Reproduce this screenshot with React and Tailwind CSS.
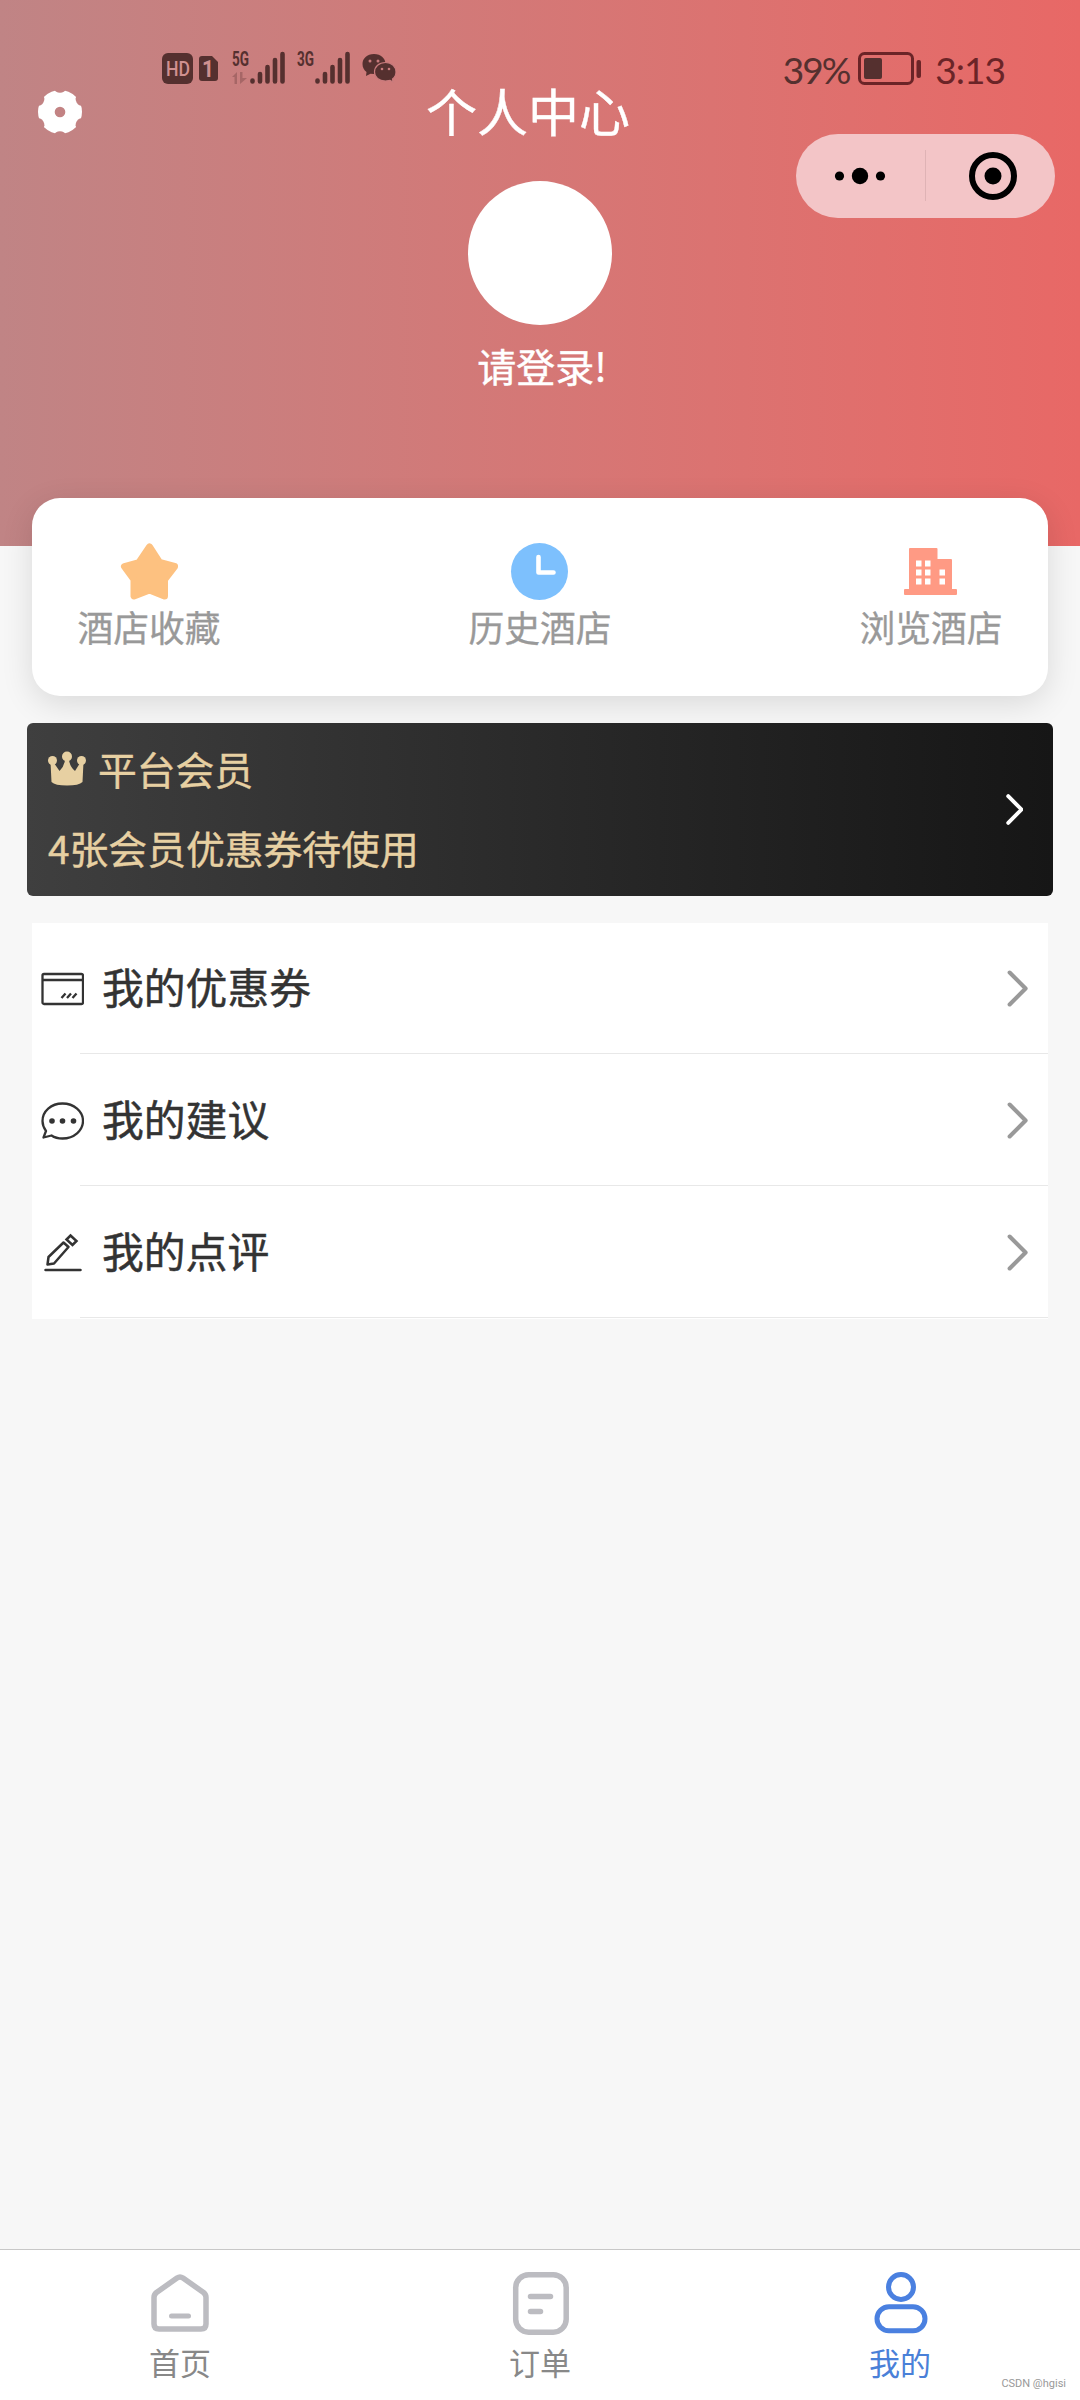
const shortcuts = [
  { label: "酒店收藏", icon: StarIcon },
  { label: "历史酒店", icon: ClockIcon },
  { label: "浏览酒店", icon: HotelIcon },
];

const menus = [
  { label: "我的优惠券", icon: CouponIcon },
  { label: "我的建议", icon: SuggestIcon },
  { label: "我的点评", icon: ReviewIcon },
];

const tabs = [
  { label: "首页", icon: HomeIcon },
  { label: "订单", icon: OrderIcon },
  { label: "我的", icon: MineIcon, active: true },
];

function StarIcon() {
  return (
    <svg width="60" height="60" viewBox="0 0 60 60">
      <path
        d="M30.500 6L40.500 21.500L55.500 25.500L45.500 38.500L45.500 55L30.500 49L15 55L15 38.500L5.500 25.500L20 21.500Z"
        fill="#fdc180"
        stroke="#fdc180"
        strokeWidth="7"
        strokeLinejoin="round"
      />
    </svg>
  );
}

function ClockIcon() {
  return (
    <svg width="60" height="60" viewBox="0 0 60 60">
      <circle cx="29.500" cy="30.500" r="28.500" fill="#7dc0fd" />
      <path d="M28.500 16V31.500H43.500" fill="none" stroke="#fff" strokeWidth="4.600" strokeLinecap="round" strokeLinejoin="round" />
    </svg>
  );
}

function HotelIcon() {
  return (
    <svg width="60" height="60" viewBox="0 0 60 60">
      <path
        d="M8 8Q8 7 9 7H35.500Q36.500 7 36.500 8V18H50Q51 18 51 19V48H55Q56 48 56 49V53Q56 54 55 54H4Q3 54 3 53V49Q3 48 4 48H8Z"
        fill="#ff9a84"
      />
      <path
        d="M15 19.500h5.500v6h-5.500zM24 19.500h5.500v6h-5.500zM15 28.500h5.500v6h-5.500zM24 28.500h5.500v6h-5.500zM38.500 28.500h5.500v6h-5.500zM15 37.500h5.500v6h-5.500zM24 37.500h5.500v6h-5.500zM38.500 37.500h5.500v6h-5.500z"
        fill="#fff"
      />
    </svg>
  );
}

function CouponIcon() {
  return (
    <svg width="44" height="44" viewBox="0 0 44 44" fill="none" stroke="#333" strokeWidth="2.300">
      <rect x="2.500" y="7" width="40.500" height="30" rx="1.500" />
      <path d="M2.500 13h40.500M21.500 31l4-4.500M27 31l4-4.500M32.500 31l4-4.500" />
    </svg>
  );
}

function SuggestIcon() {
  return (
    <svg width="44" height="44" viewBox="0 0 44 44" fill="none" stroke="#333" strokeWidth="2.300">
      <path
        d="M6 32C3.500 28.500 2.500 26 2.500 22C2.500 12.500 11 4.500 22.500 4.500S43 12.500 43 22S34 39.500 22.500 39.500C18 39.500 14.500 38.500 11.500 36.500L3.500 38.500Z"
        strokeLinejoin="round"
      />
      <g fill="#333" stroke="none">
        <circle cx="12" cy="22" r="2.800" />
        <circle cx="22.500" cy="22" r="2.800" />
        <circle cx="33.500" cy="22" r="2.800" />
      </g>
    </svg>
  );
}

function ReviewIcon() {
  return (
    <svg width="44" height="44" viewBox="0 0 44 44" fill="none" stroke="#333" strokeWidth="2.500">
      <path d="M7.500 33.500L8.500 26L23.500 11.500L28.500 16L14 32.500Z" strokeLinejoin="round" />
      <path d="M30.500 4.500L36.500 10L32.500 14L26.500 8.500Z" />
      <path d="M5.500 39h35" strokeLinecap="round" />
    </svg>
  );
}

function HomeIcon() {
  return (
    <svg width="66" height="66" viewBox="0 0 66 66" fill="none" stroke="#bcbcc1" strokeWidth="5.500" strokeLinejoin="round" strokeLinecap="round">
      <path d="M30 9Q33 7 36 9L56.500 23.500Q59 25.500 59 28.500V55Q59 60 54 60H12Q7 60 7 55V28.500Q7 25.500 9.500 23.500Z" />
      <path d="M24.500 47h17" strokeWidth="5" />
    </svg>
  );
}

function OrderIcon() {
  return (
    <svg width="66" height="66" viewBox="0 0 66 66" fill="none" stroke="#bcbcc1" strokeWidth="5.500" strokeLinecap="round">
      <rect x="8.700" y="5.700" width="50.500" height="57.500" rx="13" />
      <path d="M23.500 27.500h20M23.500 42.500h10" />
    </svg>
  );
}

function MineIcon() {
  return (
    <svg width="66" height="66" viewBox="0 0 66 66" fill="none" stroke="#4a80e0" strokeWidth="5">
      <circle cx="34" cy="18" r="12.500" />
      <rect x="10" y="37.800" width="48" height="24" rx="12" />
    </svg>
  );
}

function GearIcon() {
  return (
    <svg width="44" height="44" viewBox="0 0 44 44">
      <mask id="gear">
        <circle cx="22" cy="22" r="22" fill="#fff" />
        <g fill="#000">
          <circle cx="22" cy="22" r="5.300" />
          {[0, 60, 120, 180, 240, 300].map((a) => (
            <ellipse key={a} cx="22" cy="-.5" rx="5.300" ry="3.300" transform={`rotate(${a} 22 22)`} />
          ))}
        </g>
      </mask>
      <rect width="44" height="44" fill="#fff" mask="url(#gear)" />
    </svg>
  );
}

function CrownIcon() {
  return (
    <svg width="38" height="36" viewBox="0 0 38 36" fill="#e7d0a2">
      <circle cx="4.500" cy="10.500" r="4.500" />
      <circle cx="19" cy="6.500" r="5" />
      <circle cx="33.500" cy="10.500" r="4.500" />
      <path d="M2.500 12L6 13L11.500 21Q16 17 17 10H21Q22 17 27 21L32 13L35.500 12L34.500 32Q31 35.500 19 35.500T3.500 32Z" />
    </svg>
  );
}

function Chevron({ className, size, stroke }) {
  return (
    <svg className={className} width={size * 0.56} height={size} viewBox="0 0 20 36" fill="none" stroke="currentColor" strokeWidth={stroke} strokeLinecap="round" strokeLinejoin="round">
      <path d="M2.500 2.500L18 18L2.500 33.500" />
    </svg>
  );
}

function Signal({ label, data }) {
  return (
    <svg className="overflow-visible" width="54" height="36" viewBox="0 0 54 36" fill="#55302f">
      <text x="0" y="16" fontSize="21" fontWeight="700" textLength="17" lengthAdjust="spacingAndGlyphs" fontFamily="Roboto, sans-serif">
        {label}
      </text>
      {data && <path d="M0 27L5 22V34H2.500V27ZM8 22H10.500V28H15L8 34Z" opacity=".3" />}
      <path
        d="M20.500 30.500v1M28 24v7.500M35.500 17v14.500M43 10v21.500M50.500 4v27.500"
        stroke="#55302f"
        strokeWidth="4.600"
        strokeLinecap="round"
      />
    </svg>
  );
}

function WechatIcon() {
  return (
    <svg width="34" height="30" viewBox="0 0 34 30">
      <path d="M12 1C5 1 .5 5.500 .5 11C.5 14.500 2 17 4.500 19L4 23L8.500 20.700L12 21C19 21 23.500 16.500 23.500 11S19 1 12 1Z" fill="#55302f" />
      <path
        d="M23.500 9.500C17 9.500 12.500 13.500 12.500 19S17 28 23.500 28L28 27.300L31 29L30.500 26C32.500 24.500 34 22 34 19C34 13.500 30 9.500 23.500 9.500Z"
        fill="#55302f"
        stroke="#c97b7d"
        strokeWidth="1.200"
      />
      <g fill="#c97b7d">
        <circle cx="8" cy="8" r="1.500" />
        <circle cx="16" cy="8" r="1.500" />
        <circle cx="20" cy="16" r="1.300" />
        <circle cx="27" cy="16" r="1.300" />
      </g>
    </svg>
  );
}

function StatusBar() {
  return (
    <div className="flex h-9 items-start justify-between pl-[162px] pr-[75px] text-[#55302f]">
      <div className="flex items-start">
        <svg width="57" height="36" viewBox="0 0 57 36">
          <rect y="3" width="31" height="31" rx="6" fill="#55302f" />
          <text x="4" y="26" fontSize="21" fontWeight="500" textLength="24" lengthAdjust="spacingAndGlyphs" fill="#d09090" fontFamily="Roboto, sans-serif">
            HD
          </text>
          <path d="M40 6H50L56 12V28Q56 31 53 31H40Q37 31 37 28V9Q37 6 40 6Z" fill="#55302f" />
          <text x="40" y="27" fontSize="23" fontWeight="700" textLength="12" lengthAdjust="spacingAndGlyphs" fill="#d09090" fontFamily="Roboto, sans-serif">
            1
          </text>
        </svg>
        <div className="ml-[13px] flex gap-[11px]">
          <Signal label="5G" data />
          <Signal label="3G" />
        </div>
        <div className="ml-[11px] pt-[3px]">
          <WechatIcon />
        </div>
      </div>
      <div className="flex items-start font-[Lato,sans-serif] text-[37px] leading-[39px]">
        <span className="tracking-[-2px]">39%</span>
        <svg className="ml-[9px] mr-[13px]" width="64" height="36" viewBox="0 0 64 36">
          <rect x="1.500" y="3.500" width="53" height="30" rx="5" fill="none" stroke="#6b2427" strokeWidth="3" />
          <rect x="6" y="8" width="18" height="21" rx="2" fill="#55302f" />
          <rect x="58.500" y="10" width="4.500" height="18" rx="2" fill="#6b2427" />
        </svg>
        <span className="tracking-[-1px] text-[#6b2427]">3:13</span>
      </div>
    </div>
  );
}

function Capsule() {
  return (
    <div className="absolute left-[796px] top-[134px] flex h-[84px] w-[259px] items-center rounded-full bg-[#f3c5c7]">
      <svg width="259" height="84" viewBox="0 0 259 84">
        <circle cx="43.500" cy="42" r="4.600" />
        <circle cx="64" cy="42" r="8.200" />
        <circle cx="84.500" cy="42" r="4.600" />
        <path d="M129.500 16v51" stroke="#dfb3b5" strokeWidth="1" />
        <circle cx="197" cy="42" r="21" fill="none" stroke="#000" strokeWidth="6" />
        <circle cx="197" cy="42" r="8.500" />
      </svg>
    </div>
  );
}

export default function App() {
  return (
    <div className="relative flex h-[2400px] w-[1080px] flex-col overflow-hidden bg-[#f7f7f7] font-['Noto_Sans_CJK_SC',sans-serif]">
      <header className="h-[546px] shrink-0 bg-linear-to-r from-[#c08485] to-[#e86866] pt-[50px] text-white">
        <StatusBar />
        <div className="flex h-[52px] items-center pl-[38px]">
          <GearIcon />
          <h1 className="ml-[344px] pb-[5px] text-[51px] leading-[52px] [-webkit-text-stroke:0.4px]">个人中心</h1>
        </div>
        <div className="mt-[43px] flex flex-col items-center">
          <div className="size-36 rounded-full bg-white" />
          <p className="ml-1 mt-5 text-[39px] leading-[40px] [-webkit-text-stroke:0.4px]">请登录!</p>
        </div>
      </header>
      <Capsule />

      {/* 快捷入口 */}
      <section className="relative mx-8 -mt-12 flex h-[198px] shrink-0 justify-between rounded-[28px] bg-white px-[45px] pt-[43px] shadow-[0_8px_32px_rgba(0,0,0,0.12)]">
        {shortcuts.map(({ label, icon: Icon }) => (
          <div key={label} className="flex w-36 flex-col items-center">
            <Icon />
            <span className="mt-[5px] text-[35.8px] leading-[40px] text-[#999] [-webkit-text-stroke:0.3px]">{label}</span>
          </div>
        ))}
      </section>

      {/* 会员 */}
      <section className="relative mx-[27px] mt-[27px] flex h-[173px] shrink-0 items-center justify-between rounded-md bg-linear-to-r from-[#3f3f3f] to-[#161616] pb-1 pl-[21px] pr-[30px] text-[38.800px] leading-[40px] text-[#e7d0a2] [-webkit-text-stroke:0.4px]">
        <div className="flex flex-col gap-[39px]">
          <div className="flex items-center">
            <CrownIcon />
            <span className="ml-3">平台会员</span>
          </div>
          <span>4张会员优惠券待使用</span>
        </div>
        <Chevron className="mt-1 text-white" size={31} stroke={4.5} />
      </section>

      <section className="mx-8 mt-[27px] shrink-0 bg-white">
        {menus.map(({ label, icon: Icon }) => (
          <div key={label} className="flex h-[132px] flex-col">
            <div className="flex h-[130px] items-center pl-2 pr-5 pt-px">
              <Icon />
              <span className="ml-[18px] flex-1 pb-[5px] text-[41.800px] leading-[44px] text-[#333] [-webkit-text-stroke:0.5px]">{label}</span>
              <Chevron className="text-[#999]" size={37} stroke={4} />
            </div>
            <div className="ml-12 h-px bg-[#e8e8e8]" />
          </div>
        ))}
      </section>

      <nav className="mt-auto flex h-[151px] shrink-0 border-t border-[#c8c8c8] bg-white pt-[19px]">
        {tabs.map(({ label, icon: Icon, active }) => (
          <div key={label} className="flex flex-1 flex-col items-center">
            <Icon />
            <span className={`mt-[9px] text-[31px] leading-[36px] ${active ? "text-[#4a80d8]" : "text-[#888]"}`}>{label}</span>
          </div>
        ))}
      </nav>
      <span className="absolute bottom-[9px] right-[14px] font-[Roboto,sans-serif] text-[11px] leading-[14px] text-[#999]">CSDN @hgisi</span>
    </div>
  );
}
